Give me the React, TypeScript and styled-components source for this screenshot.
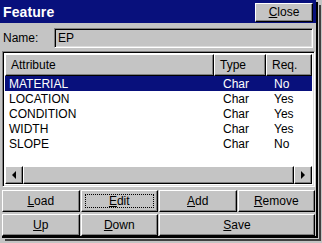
import React from "react";
import styled, { createGlobalStyle } from "styled-components";

const GRAY = "#c4c4c4";
const NAVY = "#08107c";

const Global = createGlobalStyle`
  html, body { margin: 0; padding: 0; background: ${GRAY}; }
  body { font-family: "Liberation Sans", Arial, sans-serif; font-size: 12px; color: #000; }
  * { box-sizing: border-box; }
`;

const Page = styled.div`
  width: 322px;
  height: 243px;
  background: ${GRAY};
  overflow: hidden;
`;

const Window = styled.div`
  width: 316px;
  height: 236px;
  background: ${GRAY};
  display: flex;
  flex-direction: column;
  box-shadow: 2px 2px 0 #000, 3px 3px 0 ${GRAY}, 5px 5px 0 #404040;
`;

const TitleBar = styled.div`
  height: 23px;
  background: ${NAVY};
  display: flex;
  align-items: center;
  justify-content: space-between;
  padding: 0 3px 0 3px;
`;

const Title = styled.div`
  color: #fff;
  font-weight: bold;
  font-size: 14px;
  letter-spacing: 0.1px;
`;

const Raised = styled.button`
  font-family: "Liberation Sans", Arial, sans-serif;
  font-size: 12px;
  color: #000;
  background: ${GRAY};
  border: 1px solid;
  border-color: #fff #000 #000 #fff;
  box-shadow: inset -1px -1px 0 #808080;
  padding: 0;
  margin: 0;
  display: flex;
  align-items: center;
  justify-content: center;
  position: relative;
  cursor: default;
`;

const CloseButton = styled(Raised)`
  width: 58px;
  height: 19px;
  margin-top: 1px;
`;

const NameRow = styled.div`
  display: flex;
  align-items: center;
  height: 27px;
  padding: 3px 3px 0 3px;
`;

const Label = styled.div`
  width: 51px;
`;

const Input = styled.div`
  flex: 1;
  height: 20px;
  background: ${GRAY};
  border: 1px solid;
  border-color: #808080 #fff #fff #808080;
  box-shadow: inset 1px 1px 0 #000, inset -1px -1px 0 #dcdcdc;
  padding: 0 3px;
  display: flex;
  align-items: center;
`;

const List = styled.div`
  margin: 1px 1px 0 2px;
  height: 136px;
  border: 1px solid;
  border-color: #808080 #fff #fff #808080;
  box-shadow: inset 1px 1px 0 #000, inset -1px -1px 0 #dcdcdc;
  padding: 2px;
  display: flex;
  flex-direction: column;
  background: #fff;
`;

const Header = styled.div`
  display: grid;
  grid-template-columns: 209px 52px 1fr;
  height: 22px;
  background: ${GRAY};
`;

const HeaderCell = styled.div`
  border: 1px solid;
  border-color: #fff #000 #000 #fff;
  box-shadow: inset -1px -1px 0 #808080;
  display: flex;
  align-items: center;
  padding-left: 5px;
`;

const Rows = styled.div`
  flex: 1;
  background: #fff;
`;

const Row = styled.div<{ $sel?: boolean }>`
  display: grid;
  grid-template-columns: 214px 51px 1fr;
  height: 15px;
  align-items: center;
  background: ${(p) => (p.$sel ? NAVY : "#fff")};
  color: ${(p) => (p.$sel ? "#fff" : "#000")};
  padding-left: 4px;
`;

const Cell = styled.div`
  white-space: nowrap;
`;

const ScrollBar = styled.div`
  display: flex;
  height: 18px;
  background: ${GRAY};
`;

const ScrollButton = styled.div`
  width: 18px;
  height: 18px;
  border: 1px solid;
  border-color: #fff #000 #000 #fff;
  box-shadow: inset -1px -1px 0 #808080;
  display: flex;
  align-items: center;
  justify-content: center;
`;

const Thumb = styled.div`
  flex: 1;
  border: 1px solid;
  border-color: #fff #000 #000 #fff;
  box-shadow: inset -1px -1px 0 #808080;
`;

const ButtonGrid = styled.div`
  display: grid;
  grid-template-columns: repeat(4, 1fr);
  grid-auto-rows: 22px;
  gap: 2px 1px;
  margin: 3px 1px 0 2px;
`;

const ActionButton = styled(Raised)<{ $span?: number }>`
  grid-column: span ${(p) => p.$span ?? 1};
  height: 22px;
`;

const Focus = styled.span`
  position: absolute;
  left: 3px;
  top: 3px;
  right: 3px;
  bottom: 3px;
  border: 1px dotted #000;
  pointer-events: none;
`;

const U = styled.span`
  text-decoration: underline;
  text-underline-offset: 1px;
`;

const rows = [
  ["MATERIAL", "Char", "No"],
  ["LOCATION", "Char", "Yes"],
  ["CONDITION", "Char", "Yes"],
  ["WIDTH", "Char", "Yes"],
  ["SLOPE", "Char", "No"],
];

const Arrow = ({ dir }: { dir: "left" | "right" }) => (
  <svg width="6" height="8" viewBox="0 0 6 8">
    {dir === "left" ? (
      <polygon points="5,0 5,8 1,4" fill="#000" />
    ) : (
      <polygon points="1,0 1,8 5,4" fill="#000" />
    )}
  </svg>
);

const Mn = ({ text, idx = 0 }: { text: string; idx?: number }) => (
  <span>
    {text.slice(0, idx)}
    <U>{text[idx]}</U>
    {text.slice(idx + 1)}
  </span>
);

export default function App() {
  return (
    <Page>
      <Global />
      <Window>
        <TitleBar>
          <Title>Feature</Title>
          <CloseButton>
            <Mn text="Close" />
          </CloseButton>
        </TitleBar>
        <NameRow>
          <Label>Name:</Label>
          <Input>EP</Input>
        </NameRow>
        <List>
          <Header>
            <HeaderCell>Attribute</HeaderCell>
            <HeaderCell>Type</HeaderCell>
            <HeaderCell>Req.</HeaderCell>
          </Header>
          <Rows>
            {rows.map((r, i) => (
              <Row key={r[0]} $sel={i === 0}>
                <Cell>{r[0]}</Cell>
                <Cell>{r[1]}</Cell>
                <Cell>{r[2]}</Cell>
              </Row>
            ))}
          </Rows>
          <ScrollBar>
            <ScrollButton>
              <Arrow dir="left" />
            </ScrollButton>
            <Thumb />
            <ScrollButton>
              <Arrow dir="right" />
            </ScrollButton>
          </ScrollBar>
        </List>
        <ButtonGrid>
          <ActionButton>
            <Mn text="Load" />
          </ActionButton>
          <ActionButton>
            <Mn text="Edit" />
            <Focus />
          </ActionButton>
          <ActionButton>
            <Mn text="Add" />
          </ActionButton>
          <ActionButton>
            <Mn text="Remove" />
          </ActionButton>
          <ActionButton>
            <Mn text="Up" />
          </ActionButton>
          <ActionButton>
            <Mn text="Down" />
          </ActionButton>
          <ActionButton $span={2}>
            <Mn text="Save" />
          </ActionButton>
        </ButtonGrid>
      </Window>
    </Page>
  );
}
